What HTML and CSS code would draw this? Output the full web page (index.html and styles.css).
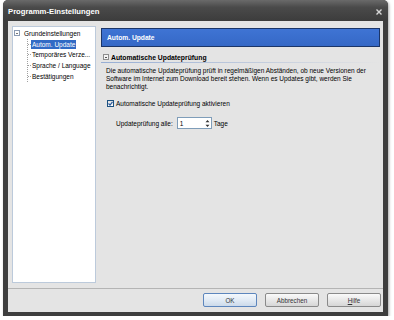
FILE: index.html
```html
<!DOCTYPE html>
<html lang="de">
<head>
  <meta charset="UTF-8" />
  <title>Programm-Einstellungen</title>
  <link rel="stylesheet" href="styles.css">
</head>
<body>
  <div class="window">
    <div class="titlebar">
      <span class="title">Programm-Einstellungen</span>
      <svg class="close" width="6" height="6" viewBox="0 0 6 6"><path d="M0.5 0.5L5.5 5.5M5.5 0.5L0.5 5.5" stroke="#d8d8d8" stroke-width="1.4"/></svg>
    </div>
    <div class="client">
      <div class="main">
        <div class="tree">
          <div class="root"><span class="expander"></span>Grundeinstellungen</div>
          <ul class="children">
            <li><span class="sel">Autom. Update</span></li>
            <li><span>Temporäres Verze...</span></li>
            <li><span>Sprache / Language</span></li>
            <li class="last"><span>Bestätigungen</span></li>
          </ul>
        </div>
        <div class="page">
          <div class="page-header">Autom. Update</div>
          <div class="section-head"><span class="collapse"></span>Automatische Updateprüfung</div>
          <p class="desc">Die automatische Updateprüfung prüft in regelmäßigen Abständen, ob neue Versionen der<br>Software im Internet zum Download bereit stehen. Wenn es Updates gibt, werden Sie<br>benachrichtigt.</p>
          <div class="check">
            <span class="box"><svg width="5" height="5" viewBox="0 0 5 5"><path d="M0.5 2.5L2 4L4.5 0.8" fill="none" stroke="#2a5a9c" stroke-width="1.2"/></svg></span>
            Automatische Updateprüfung aktivieren
          </div>
          <div class="interval">
            <span>Updateprüfung alle:</span>
            <span class="spin"><span class="val">1</span><span class="arrows">
              <svg width="5" height="9" viewBox="0 0 5 9"><path d="M2.5 1L4.5 3.2H0.5Z M2.5 8L0.5 5.8H4.5Z" fill="#333"/></svg>
            </span></span>
            <span>Tage</span>
          </div>
        </div>
      </div>
      <div class="footer">
        <button class="btn default">OK</button>
        <button class="btn">Abbrechen</button>
        <button class="btn"><u>H</u>ilfe</button>
      </div>
    </div>
  </div>
</body>
</html>
```

FILE: styles.css
```css
body{margin:0;background:#fff;font-family:"Liberation Sans",Arial,sans-serif;font-size:6.5px;color:#000;}
.window{margin-left:3px;width:385px;height:316px;box-sizing:border-box;background:#3e3e3e;border-radius:5px 5px 0 0;display:flex;flex-direction:column;box-shadow:1px 1px 3px rgba(0,0,0,0.35);}
.titlebar{height:21px;box-sizing:border-box;padding:2px 6px 0 5px;display:flex;align-items:center;background:linear-gradient(#6a6a6a,#4a4a4a 35%,#3c3c3c);border-radius:5px 5px 0 0;}
.title{color:#fff;font-weight:bold;font-size:7.7px;margin-right:auto;}
.close{display:block;}
.client{flex:1;margin:0 5px 4px 5px;background:#e4e4e4;display:flex;flex-direction:column;}
.main{display:flex;gap:5px;padding:5px 3px 0 4px;height:262px;box-sizing:border-box;}

/* Baum */
.tree{width:84px;box-sizing:border-box;background:#fff;border:1px solid #bccadb;padding-top:1px;}
.root{display:flex;align-items:center;height:10.75px;}
.expander{width:6px;height:6px;box-sizing:border-box;border:1px solid #8c9cb4;margin:0 4px 0 1px;background:linear-gradient(#777,#777) center/2px 1px no-repeat,#fff;}
.children{list-style:none;margin:0 0 0 14px;padding:0;border-left:1px dotted #a0a0a0;}
.children li{display:flex;align-items:center;height:10.75px;}
.children li::before{content:"";width:3px;border-top:1px dotted #a0a0a0;}
.children li span{padding:0 1px;line-height:9px;}
.children .sel{background:#316ac5;color:#fff;}

/* Seite */
.page{width:279px;}
.page-header{margin-top:2px;height:19px;box-sizing:border-box;border:1px solid #1b3568;background:linear-gradient(#3f74d4,#3568c6);color:#fff;font-weight:bold;font-size:6.7px;padding-left:5px;display:flex;align-items:center;}
.section-head{margin-top:5px;height:11px;box-sizing:border-box;padding-bottom:1px;display:flex;align-items:center;font-weight:bold;font-size:6.8px;background:linear-gradient(to right,#97aed4,#e4e4e4) bottom/100% 1px no-repeat;}
.collapse{width:6px;height:6px;box-sizing:border-box;border:1px solid #8c8c8c;margin:0 2px;background:linear-gradient(#555,#555) center/2px 1px no-repeat,#f4f4f4;}
.desc{margin:4px 0 0 0;padding-left:5px;line-height:8px;white-space:nowrap;}
.check{margin-top:8px;height:9px;display:flex;align-items:center;padding-left:6px;}
.box{width:7px;height:7px;box-sizing:border-box;border:1px solid #1c5180;background:linear-gradient(#e0e0e0,#fff);display:flex;align-items:center;justify-content:center;margin-right:2px;}
.box svg{display:block;}
.interval{margin-top:9px;display:flex;align-items:center;padding-left:15px;height:12px;}
.spin{width:35px;height:12px;box-sizing:border-box;border:1px solid #7f9db9;background:#fff;display:flex;align-items:center;margin:0 2px 0 4px;}
.val{flex:1;padding-left:2px;}
.arrows{width:7px;display:flex;justify-content:center;}
.arrows svg{display:block;}

/* Knöpfe */
.footer{margin-top:5px;border-top:1px solid #b4b4b4;padding:4px 2px 5px 0;display:flex;justify-content:flex-end;gap:8px;}
.btn{width:54px;height:14px;padding:0;font-family:inherit;font-size:6.3px;color:#333;border:1px solid #8a8a8a;border-radius:2px;background:linear-gradient(#fafafa,#e8e8e8 50%,#d6d6d6);}
.btn.default{border-color:#5d86bd;background:linear-gradient(#f4f8fc,#e2ebf5 50%,#ccdaea);}
```
